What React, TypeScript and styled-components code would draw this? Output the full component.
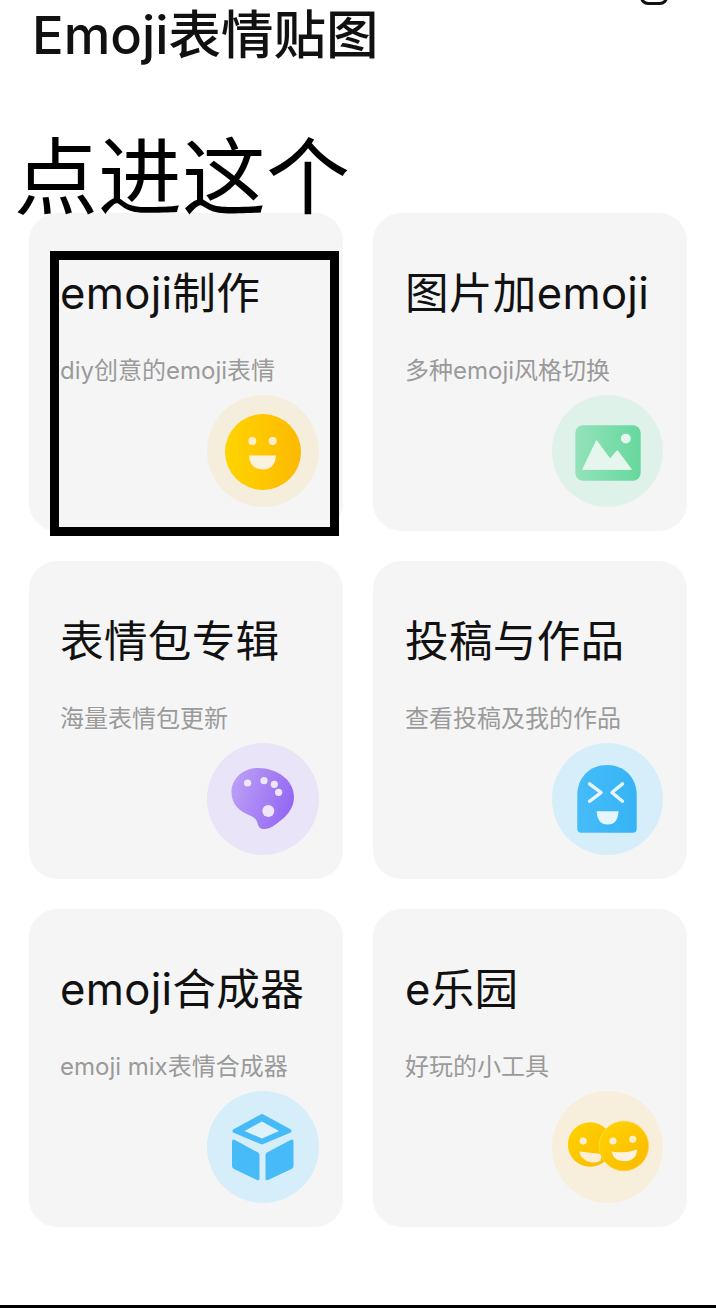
import React from "react";
import styled, { createGlobalStyle } from "styled-components";

const Global = createGlobalStyle`
  html, body { margin: 0; padding: 0; background: #fff; }
  #root { width: 716px; height: 1308px; }
  * { box-sizing: border-box; }
`;

const Page = styled.div`
  position: relative;
  width: 716px;
  height: 1308px;
  overflow: hidden;
  background: #fff;
  font-family: Inter, "Noto Sans CJK SC", sans-serif;
  display: flex;
  flex-direction: column;
`;

const Header = styled.h1`
  margin: 0;
  padding: 0 0 0 32px;
  height: 133px;
  font-size: 52.5px;
  line-height: 70px;
  font-weight: 500;
  color: #111;
`;

const Note = styled.div`
  height: 80px;
  padding-left: 14px;
  font-size: 84px;
  line-height: 78px;
  font-weight: 400;
  color: #000;
  white-space: nowrap;
  position: relative;
  z-index: 2;
  font-family: "Noto Sans CJK SC", sans-serif;
`;

const StatusIcon = styled.div`
  position: absolute;
  right: 48px;
  top: -24px;
  width: 28px;
  height: 29px;
  border: 3px solid #111;
  border-radius: 8px;
`;

const Grid = styled.div`
  display: grid;
  grid-template-columns: 314px 314px;
  grid-auto-rows: 318px;
  gap: 30px;
  padding-left: 29px;
`;

const Badge = styled.div<{ $tint: string }>`
  margin-top: auto;
  align-self: flex-end;
  width: 112px;
  height: 112px;
  border-radius: 50%;
  background: ${(p) => p.$tint};
  svg { display: block; width: 100%; height: 100%; }
`;

const Card = styled.div`
  background: #f5f5f5;
  border-radius: 28px;
  padding: 53px 24px 24px 31px;
  display: flex;
  flex-direction: column;
  &:nth-child(even) { padding-left: 32px; }
  &:nth-child(even) ${Badge} { width: 111px; }
`;

const Title = styled.div`
  font-size: 43.6px;
  line-height: 56px;
  letter-spacing: 0.3px;
  font-weight: 400;
  color: #111;
  white-space: nowrap;
`;

const Sub = styled.div`
  margin-top: 33px;
  font-size: 24px;
  line-height: 31px;
  color: #9a9a9a;
  white-space: nowrap;
`;

const Footer = styled.div`
  position: absolute;
  left: 0;
  right: 0;
  bottom: 0;
  height: 3px;
  background: #000;
`;

const Highlight = styled.div`
  position: absolute;
  left: 50px;
  top: 251px;
  width: 289px;
  height: 285px;
  border: 9px solid #000;
  pointer-events: none;
`;

const Smile = () => (
  <svg viewBox="0 0 112 112">
    <defs>
      <linearGradient id="y1" x1="0" x2="1" y1="0" y2="0">
        <stop offset="0" stopColor="#ffd400" />
        <stop offset="1" stopColor="#fdb900" />
      </linearGradient>
    </defs>
    <circle cx="56" cy="57" r="38" fill="url(#y1)" />
    <circle cx="45.4" cy="46" r="4" fill="#fbeecf" />
    <circle cx="65.7" cy="46" r="4" fill="#fbeecf" />
    <path d="M42 60.5H69Q68 74.5 55.5 74.5T42 60.5Z" fill="#fbf3e0" />
  </svg>
);

const Picture = () => (
  <svg viewBox="0 0 112 112">
    <defs>
      <linearGradient id="g1" x1="0" x2="1" y1="0" y2="0">
        <stop offset="0" stopColor="#93e2ba" />
        <stop offset="1" stopColor="#66d89d" />
      </linearGradient>
    </defs>
    <rect x="23.5" y="30" width="66" height="56" rx="8" fill="url(#g1)" />
    <circle cx="74.5" cy="43.5" r="5" fill="#e6f6ee" />
    <path d="M31 74.5L45 45.5L58.5 64L66 55.5L80 74.5Z" fill="#e6f6ee" strokeLinejoin="round" stroke="#e6f6ee" strokeWidth="1" />
  </svg>
);

const Palette = () => (
  <svg viewBox="0 0 112 112">
    <defs>
      <linearGradient id="p1" x1="0" x2="1" y1="0.2" y2="0.5">
        <stop offset="0" stopColor="#bca0f6" />
        <stop offset="1" stopColor="#9468f3" />
      </linearGradient>
    </defs>
    <path
      d="M51 25C70 25 87 37 87 54C87 64 81 72 73 78C68 82 63 86 58 86C53 86 51.5 84 50.5 80C49.5 76 46 73.5 42 72C33 68.5 24.5 62 24.5 49C24.5 36 36 25 51 25Z"
      fill="url(#p1)"
    />
    <circle cx="40.6" cy="40" r="3.6" fill="#efe6fb" />
    <circle cx="57" cy="37.7" r="3.6" fill="#efe6fb" />
    <circle cx="67.3" cy="41.3" r="3.6" fill="#efe6fb" />
    <circle cx="71.6" cy="49.3" r="3.6" fill="#efe6fb" />
    <circle cx="61.3" cy="68" r="6" fill="#efe6fb" />
  </svg>
);

const Ghost = () => (
  <svg viewBox="0 0 112 112">
    <defs>
      <linearGradient id="b1" x1="0" x2="1" y1="0" y2="0">
        <stop offset="0" stopColor="#45bcf8" />
        <stop offset="1" stopColor="#36b3f5" />
      </linearGradient>
    </defs>
    <path d="M25.5 52C25.5 34 38.5 21.7 55.5 21.7S85.5 34 85.5 52V86Q85.5 90 81.5 90H29.5Q25.5 90 25.5 86Z" fill="url(#b1)" />
    <path d="M37.8 40.7L49.5 49.5L37.8 58.3M71.1 40.7L60.5 49.5L71.1 58.3" fill="none" stroke="#e6f6fd" strokeWidth="3.4" strokeLinecap="round" strokeLinejoin="round" />
    <path d="M45.1 68.3H67.1Q66.5 81.7 56.1 81.7T45.1 68.3Z" fill="#e6f6fd" />
  </svg>
);

const Cube = () => (
  <svg viewBox="0 0 112 112">
    <path d="M55 25L82.5 40L55 51.5L27.5 40Z" fill="#47bbf7" stroke="#47bbf7" strokeWidth="4" strokeLinejoin="round" />
    <path d="M55 30.5L72 40L55 47.5L37.5 40Z" fill="#dff2fb" />
    <path d="M25 50.5Q25 47.5 28 49L51 61.5Q52.5 62.5 52.5 64.5V87.5Q52.5 90 50 89L27 78Q25 77 25 75Z" fill="#47bbf7" />
    <path d="M86.5 50.5Q86.5 47.5 83.5 49L60 61.5Q58.5 62.5 58.5 64.5V87.5Q58.5 90 61 89L84.5 78Q86.5 77 86.5 75Z" fill="#47bbf7" />
  </svg>
);

const Twins = () => (
  <svg viewBox="0 0 112 112">
    <defs>
      <linearGradient id="y2" x1="0" x2="1" y1="0" y2="1">
        <stop offset="0" stopColor="#ffd400" />
        <stop offset="1" stopColor="#fbb800" />
      </linearGradient>
    </defs>
    <circle cx="38.5" cy="53.5" r="22.5" fill="url(#y2)" />
    <circle cx="31.5" cy="50" r="3.6" fill="#fbeecf" />
    <path d="M27.5 60.5L50 63L49 70Q44 72 39 71.5Q29 69 27.5 60.5Z" fill="#fbf0d6" />
    <circle cx="72.5" cy="55" r="25" fill="url(#y2)" stroke="#fbd94e" strokeWidth="0.8" />
    <circle cx="61.5" cy="50" r="3.6" fill="#fbeecf" />
    <circle cx="81.5" cy="48.3" r="3.6" fill="#fbeecf" />
    <path d="M60 60.5Q73 63 86 58.5Q85 70 73 70.5Q62 70 60 60.5Z" fill="#fbf3e0" />
  </svg>
);

const cards = [
  { title: "emoji制作", sub: "diy创意的emoji表情", tint: "#f6eedd", icon: <Smile /> },
  { title: "图片加emoji", sub: "多种emoji风格切换", tint: "#dff2e9", icon: <Picture /> },
  { title: "表情包专辑", sub: "海量表情包更新", tint: "#e9e4f7", icon: <Palette /> },
  { title: "投稿与作品", sub: "查看投稿及我的作品", tint: "#d6eef9", icon: <Ghost /> },
  { title: "emoji合成器", sub: "emoji mix表情合成器", tint: "#d6eef9", icon: <Cube /> },
  { title: "e乐园", sub: "好玩的小工具", tint: "#f7efdc", icon: <Twins /> },
];

export default function App() {
  return (
    <Page>
      <Global />
      <StatusIcon />
      <Header>Emoji表情贴图</Header>
      <Note>点进这个</Note>
      <Grid>
        {cards.map((c) => (
          <Card key={c.title}>
            <Title>{c.title}</Title>
            <Sub>{c.sub}</Sub>
            <Badge $tint={c.tint}>{c.icon}</Badge>
          </Card>
        ))}
      </Grid>
      <Highlight />
      <Footer />
    </Page>
  );
}
